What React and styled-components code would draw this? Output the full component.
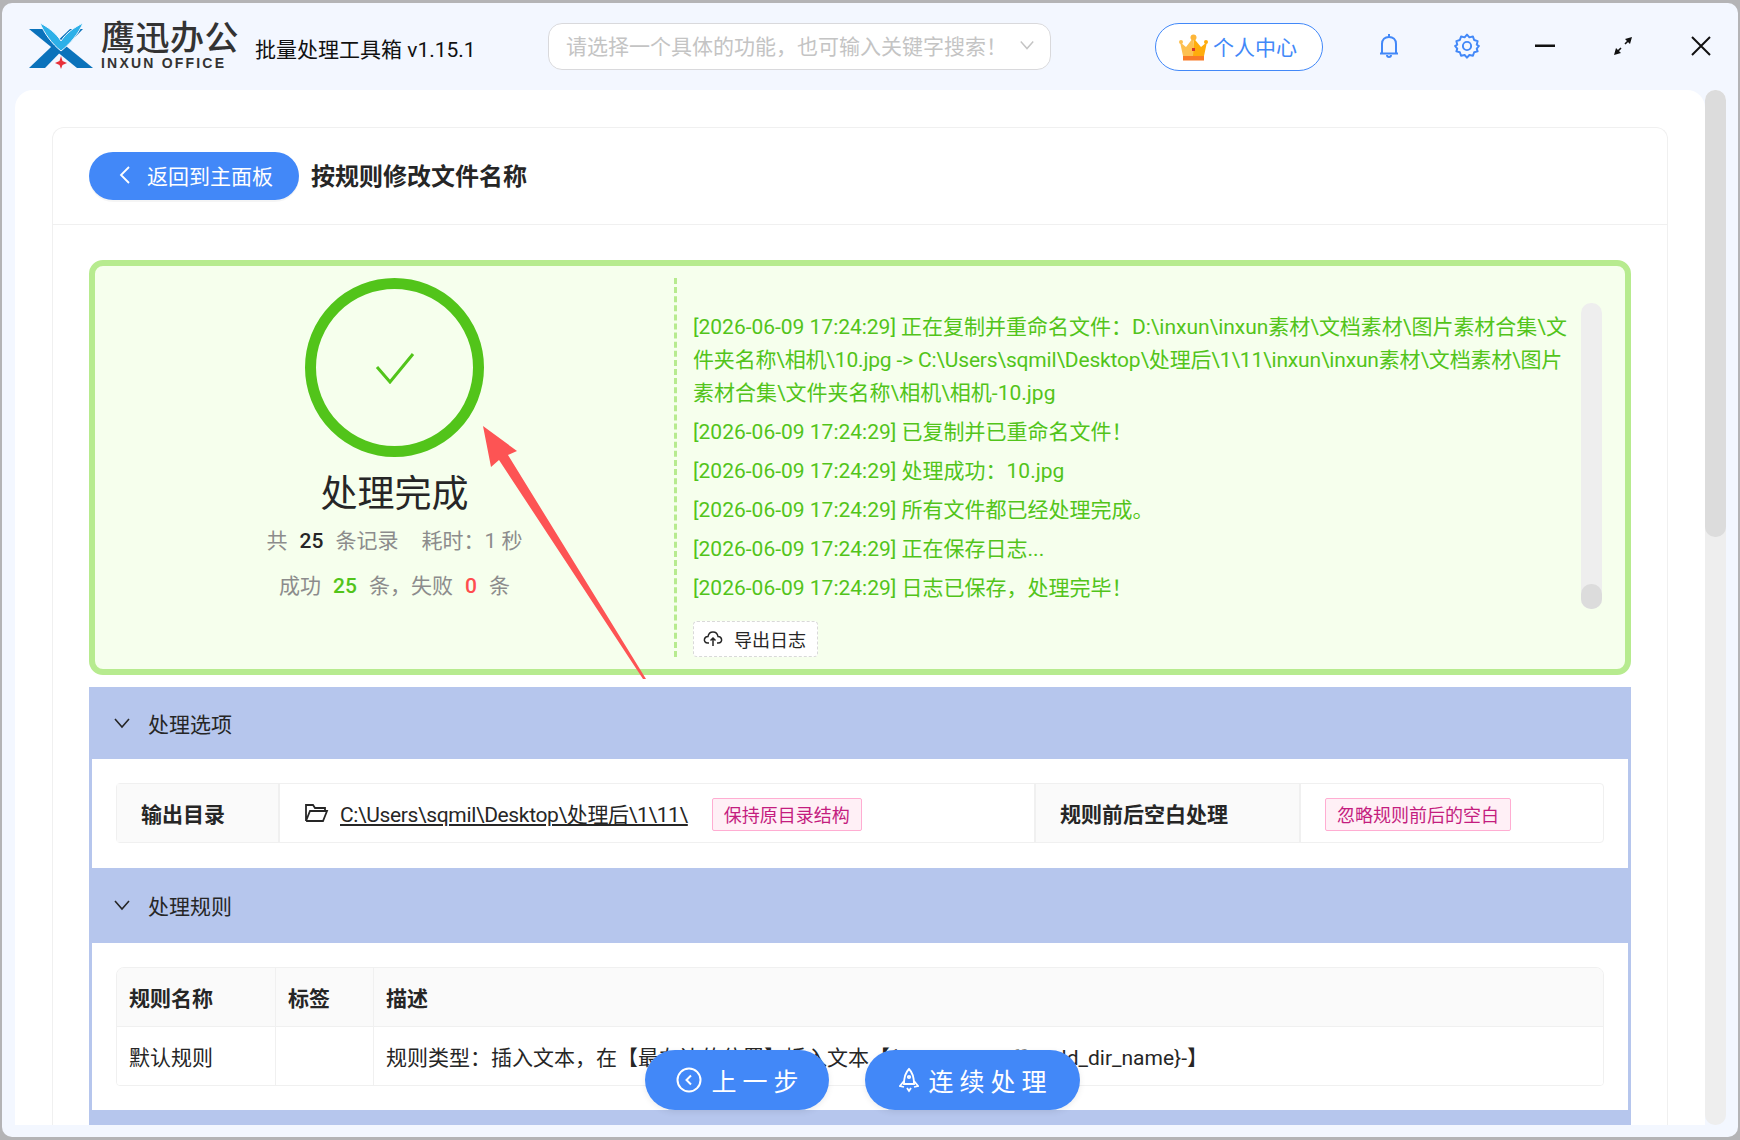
import React from "react";
import styled, { createGlobalStyle } from "styled-components";

const Global = createGlobalStyle`
  html, body { margin: 0; padding: 0; background: #b4b4b6; }
  * { box-sizing: border-box; }
  body { font-family: Roboto, "Noto Sans CJK SC", sans-serif; color: #262626; }
`;

const Screen = styled.div`
  position: relative;
  width: 1740px;
  height: 1140px;
  padding: 3px 2px 3px 2px;
  overflow: hidden;
  background: #b4b4b6;
`;
const Win = styled.div`
  width: 100%;
  height: 100%;
  background: #f3f7ff;
  border-radius: 10px;
  display: flex;
  flex-direction: column;
  overflow: hidden;
`;
const TopBar = styled.div`
  height: 87px;
  flex: none;
  display: flex;
  align-items: center;
  padding-left: 27px;
`;
const LogoMark = styled.svg`
  width: 65px;
  height: 46px;
  flex: none;
  margin-top: -2px;
`;
const LogoWords = styled.div`
  margin-left: 7px;
  width: 140px;
  display: flex;
  flex-direction: column;
  margin-top: -4px;
`;
const LogoCn = styled.div`
  font-size: 34px;
  line-height: 36px;
  font-weight: 500;
  color: #333;
  letter-spacing: 0.5px;
  white-space: nowrap;
`;
const LogoEn = styled.div`
  font-family: "Liberation Sans", sans-serif;
  font-size: 14px;
  line-height: 14px;
  font-weight: 700;
  color: #333;
  letter-spacing: 2.2px;
  white-space: nowrap;
`;
const AppName = styled.div`
  margin-left: 14px;
  width: 293px;
  margin-top: 2px;
  font-size: 21px;
  color: #111;
  white-space: nowrap;
`;
const Search = styled.div`
  width: 503px;
  height: 47px;
  margin-top: -1px;
  background: #fff;
  border: 1px solid #d9d9dc;
  border-radius: 14px;
  display: flex;
  align-items: center;
  justify-content: space-between;
  padding: 0 15px 2px 17px;
  color: #c4c4c4;
  font-size: 21px;
  white-space: nowrap;
`;
const Person = styled.div`
  margin-left: 104px;
  width: 168px;
  height: 48px;
  background: #fff;
  border: 1px solid #4288f8;
  border-radius: 24px;
  display: flex;
  align-items: center;
  padding: 0 0 2px 23px;
  gap: 5px;
  color: #4288f8;
  font-size: 21px;
  white-space: nowrap;
`;
const CrownBox = styled.svg`
  margin-top: 4px;
  flex: none;
`;
const IconBtn = styled.div`
  flex: none;
  width: ${p => p.$w}px;
  margin-left: ${p => p.$ml}px;
  margin-top: -2px;
  display: flex;
  justify-content: center;
  align-items: center;
`;
const Body = styled.div`
  flex: 1;
  min-height: 0;
  display: flex;
  padding: 0 12px 12px 13px;
`;
const Panel = styled.div`
  flex: 1;
  min-width: 0;
  background: #fff;
  border-radius: 18px 18px 0 0;
  padding: 37px 37px 0 37px;
  overflow: hidden;
`;
const Rail = styled.div`
  width: 21px;
  flex: none;
  background: #eee;
  border-radius: 10px;
  overflow: hidden;
`;
const RailThumb = styled.div`
  height: 447px;
  background: #dcdcdc;
  border-radius: 10px;
`;
const Card = styled.div`
  border: 1px solid #f0f0f0;
  border-radius: 12px 12px 0 0;
  border-bottom: none;
  height: 1100px;
`;
const CardHead = styled.div`
  height: 97px;
  display: flex;
  align-items: center;
  padding: 0 36px 0 36px;
  border-bottom: 1px solid #f0f0f0;
  gap: 12px;
`;
const BackBtn = styled.div`
  width: 210px;
  height: 48px;
  background: #4288f8;
  border-radius: 24px;
  box-shadow: 0 2px 0 rgba(0, 0, 0, 0.04);
  color: #fff;
  font-size: 21px;
  display: flex;
  align-items: center;
  padding: 0 0 2px 29px;
  gap: 15px;
  white-space: nowrap;
  margin-top: -1px;
`;
const PageTitle = styled.div`
  font-size: 24px;
  font-weight: 700;
  color: #262626;
  margin-top: -3px;
  white-space: nowrap;
`;
const CardBody = styled.div`
  padding: 35px 36px 0 36px;
`;
const Result = styled.div`
  height: 415px;
  background: #f6ffed;
  border: 6px solid #b7eb8f;
  border-radius: 14px;
  display: flex;
  padding: 12px 0 12px 0;
  margin-bottom: 12px;
`;
const Summary = styled.div`
  width: 579px;
  flex: none;
  padding-left: 20px;
  display: flex;
  flex-direction: column;
  align-items: center;
`;
const Ring = styled.div`
  width: 179px;
  height: 179px;
  border: 11px solid #52c41a;
  border-radius: 50%;
  display: flex;
  align-items: center;
  justify-content: center;
`;
const DoneTitle = styled.div`
  font-size: 37px;
  line-height: 50px;
  margin-top: 13px;
  color: #262626;
`;
const StatLine = styled.div`
  font-size: 21px;
  line-height: 30px;
  margin-top: ${p => p.$mt}px;
  color: #8c8c8c;
  display: flex;
  gap: ${p => p.$gap || 12}px;
  white-space: nowrap;
`;
const StatTail = styled.span`
  margin-left: 11px;
`;
const Num = styled.b`
  font-weight: 500;
  color: ${p => p.$c};
`;
const LogPane = styled.div`
  flex: 1;
  min-width: 0;
  border-left: 3px dashed #b7eb8f;
  padding: 25px 0 0 16px;
  display: flex;
  flex-direction: column;
`;
const LogRow = styled.div`
  display: flex;
  height: 306px;
`;
const LogList = styled.div`
  width: 878px;
  flex: none;
  overflow: hidden;
  padding-top: 8px;
`;
const LogLine = styled.div`
  color: #52c41a;
  font-size: 21px;
  line-height: 33px;
  margin-bottom: 6px;
  white-space: nowrap;
`;
const LogSegment = styled.span`
  display: block;
  letter-spacing: ${p => p.$ls || 0}px;
`;
const LogRail = styled.div`
  width: 21px;
  margin-left: 10px;
  height: 306px;
  background: #eee;
  border-radius: 10px;
  display: flex;
  align-items: flex-end;
`;
const LogThumb = styled.div`
  width: 21px;
  height: 25px;
  background: #dcdcdc;
  border-radius: 10px;
`;
const ExportBtn = styled.div`
  margin-top: 12px;
  width: 125px;
  height: 36px;
  background: #fff;
  border: 1px dashed #d9d9d9;
  border-radius: 4px;
  display: flex;
  align-items: center;
  gap: 11px;
  padding-left: 9px;
  font-size: 18px;
  color: #262626;
  white-space: nowrap;
`;
const SectionHead = styled.div`
  height: ${p => p.$h}px;
  background: #b6c6ed;
  display: flex;
  align-items: center;
  padding: 0 0 1px 24px;
  gap: 17px;
  font-size: 21px;
  color: #262626;
`;
const SectionBody = styled.div`
  height: ${p => p.$h}px;
  border-left: 3px solid #b6c6ed;
  border-right: 3px solid #b6c6ed;
  padding: 24px 24px 0 24px;
  background: #fff;
`;
const Desc = styled.div`
  height: 60px;
  display: grid;
  grid-template-columns: 163px 754px 267px 1fr;
  border: 1px solid #f0f0f0;
  border-radius: 4px;
`;
const DescLabel = styled.div`
  background: #fafafa;
  font-weight: 700;
  font-size: 21px;
  color: #262626;
  display: flex;
  align-items: center;
  padding-left: 24px;
  border-right: 2px solid #f0f0f0;
  ${p => p.$bl && "border-left: 2px solid #f0f0f0;"}
`;
const DescValue = styled.div`
  display: flex;
  align-items: center;
  padding-left: 24px;
  font-size: 21px;
  white-space: nowrap;
`;
const PathLink = styled.span`
  margin-left: 11px;
  text-decoration: underline;
  letter-spacing: -0.36px;
  color: #262626;
`;
const Tag = styled.span`
  display: inline-flex;
  align-items: center;
  height: 33px;
  padding: 0 11px;
  margin-left: ${p => p.$ml || 0}px;
  margin-top: 2px;
  background: #fff0f6;
  border: 1px solid #ffadd2;
  border-radius: 2px;
  color: #c41d7f;
  font-size: 18px;
`;
const RuleTable = styled.div`
  border: 1px solid #f0f0f0;
  border-radius: 8px 8px 4px 4px;
  overflow: hidden;
`;
const RuleRow = styled.div`
  display: grid;
  grid-template-columns: 159px 98px 1fr;
  height: ${p => p.$h}px;
  background: ${p => (p.$head ? "#fafafa" : "#fff")};
  font-weight: ${p => (p.$head ? 700 : 400)};
  font-size: 21px;
  border-bottom: ${p => (p.$head ? "1px solid #f0f0f0" : "none")};
`;
const RuleCell = styled.div`
  display: flex;
  align-items: center;
  padding-left: 12px;
  white-space: nowrap;
  border-right: ${p => (p.$last ? "none" : "1px solid #f0f0f0")};
`;
const FloatBtn = styled.div`
  position: absolute;
  left: ${p => p.$x}px;
  top: 1050px;
  width: ${p => p.$w}px;
  height: 60px;
  background: #4288f8;
  border-radius: 30px;
  box-shadow: 0 2px 6px rgba(0, 0, 0, 0.08);
  color: #fff;
  font-size: 25px;
  letter-spacing: 6px;
  display: flex;
  align-items: center;
  justify-content: center;
  padding-left: 7px;
  gap: 9px;
  white-space: nowrap;
`;
const Overlay = styled.svg`
  position: absolute;
  left: 0;
  top: 0;
  pointer-events: none;
`;

const Crown = () => (
  <CrownBox width="29" height="27" viewBox="0 0 29 27">
    <path d="M1 8 L7 13 L14 4 L14 22 L4 22 Z" fill="#fdc050" />
    <path d="M28 8 L22 13 L14.500 4 L14 22 L25 22 Z" fill="#ffac0c" />
    <rect x="4" y="22" width="21" height="4.500" fill="#f97b26" />
    <circle cx="14.500" cy="3.500" r="3" fill="#fdb63a" />
    <circle cx="2" cy="8" r="2" fill="#fdc050" />
    <circle cx="27" cy="8" r="2" fill="#ffac0c" />
    <rect x="13" y="14" width="3" height="3" fill="#d7352b" />
  </CrownBox>
);

const Chevron = ({ size = 18, color = "#262626" }) => (
  <svg width={size} height={size} viewBox="0 0 18 18" fill="none" stroke={color} strokeWidth="1.600">
    <path d="M2 5 L9 13 L16 5" />
  </svg>
);

const logLead = [
  { text: "[2026-06-09 17:24:29] 正在复制并重命名文件：D:\\inxun\\inxun素材\\文档素材\\图片素材合集\\文", ls: -0.02 },
  { text: "件夹名称\\相机\\10.jpg -> C:\\Users\\sqmil\\Desktop\\处理后\\1\\11\\inxun\\inxun素材\\文档素材\\图片", ls: -0.18 },
  { text: "素材合集\\文件夹名称\\相机\\相机-10.jpg", ls: 0 },
];

const logs = [
  "[2026-06-09 17:24:29] 已复制并已重命名文件！",
  "[2026-06-09 17:24:29] 处理成功：10.jpg",
  "[2026-06-09 17:24:29] 所有文件都已经处理完成。",
  "[2026-06-09 17:24:29] 正在保存日志...",
  "[2026-06-09 17:24:29] 日志已保存，处理完毕！",
];

export default function App() {
  return (
    <Screen>
      <Global />
      <Win>
        <TopBar>
          <LogoMark viewBox="0 0 65 46">
            <path d="M0 6 H16 L64 45 H48 Z" fill="#0a72bb" />
            <path d="M54 6 H41 L0 45 H16 Z" fill="#0a72bb" />
            <path d="M11 0 C19 4 27 10 32 18 C37 10 46 4 54 0 C50 10 41 21 32 28 C23 21 15 10 11 0 Z" fill="#2db0e8" stroke="#f3f7ff" strokeWidth="1" />
            <path d="M32 33 L33.500 38 L38 40 L33.500 42 L32 46 L30.500 42 L26 40 L30.500 38 Z" fill="#e8303a" />
          </LogoMark>
          <LogoWords>
            <LogoCn>鹰迅办公</LogoCn>
            <LogoEn>INXUN OFFICE</LogoEn>
          </LogoWords>
          <AppName>批量处理工具箱 v1.15.1</AppName>
          <Search>
            <span>请选择一个具体的功能，也可输入关键字搜索！</span>
            <Chevron size={16} color="#c4c4c4" />
          </Search>
          <Person>
            <Crown />
            <span>个人中心</span>
          </Person>
          <IconBtn $w={22} $ml={55}>
            <svg width="22" height="26" viewBox="0 0 22 26" fill="none" stroke="#4288f8" strokeWidth="2">
              <path d="M4 20 V11 C4 6.500 7 4 11 4 C15 4 18 6.500 18 11 V20 M2 20.500 H20" />
              <path d="M11 1 V4 M9 22 C9 24.500 13 24.500 13 22" />
            </svg>
          </IconBtn>
          <IconBtn $w={26} $ml={54}>
            <svg width="26" height="26" viewBox="0 0 24 24" fill="none" stroke="#4288f8" strokeWidth="1.800" strokeLinejoin="round">
              <path d="M12 1.500 L14.200 4 L17.500 3.300 L18.600 6.500 L21.800 7.500 L21 10.800 L23 12 L21 14.500 L21.800 17 L18.600 17.800 L17.500 21 L14.200 20.300 L12 22.800 L9.800 20.300 L6.500 21 L5.400 17.800 L2.200 17 L3 14.500 L1 12 L3 10.800 L2.200 7.500 L5.400 6.500 L6.500 3.300 L9.800 4 Z" />
              <circle cx="12" cy="12" r="3.800" />
            </svg>
          </IconBtn>
          <IconBtn $w={22} $ml={55}>
            <svg width="22" height="4" viewBox="0 0 22 4"><rect y="0.500" width="20" height="2.500" fill="#111" /></svg>
          </IconBtn>
          <IconBtn $w={22} $ml={55}>
            <svg width="22" height="22" viewBox="0 0 22 22" fill="none" stroke="#111" strokeWidth="1.600">
              <path d="M6 16 L9 13 M13 9 L16 6" />
              <path d="M20 2 L13 4 L18 9 Z M2 20 L4 13 L9 18 Z" fill="#111" stroke="none" />
            </svg>
          </IconBtn>
          <IconBtn $w={22} $ml={56}>
            <svg width="22" height="22" viewBox="0 0 22 22" fill="none" stroke="#111" strokeWidth="2">
              <path d="M2 2 L20 20 M20 2 L2 20" />
            </svg>
          </IconBtn>
        </TopBar>
        <Body>
          <Panel>
            <Card>
              <CardHead>
                <BackBtn>
                  <svg width="14" height="20" viewBox="0 0 14 20" fill="none" stroke="#fff" strokeWidth="1.800"><path d="M11 2 L3 10 L11 18" /></svg>
                  <span>返回到主面板</span>
                </BackBtn>
                <PageTitle>按规则修改文件名称</PageTitle>
              </CardHead>
              <CardBody>
                <Result>
                  <Summary>
                    <Ring>
                      <svg width="40" height="32" viewBox="0 0 40 32" fill="none" stroke="#52c41a" strokeWidth="3"><path d="M2 15 L15 30 L38 2" /></svg>
                    </Ring>
                    <DoneTitle>处理完成</DoneTitle>
                    <StatLine $mt={6} $gap={12}>
                      <span>共</span><Num $c="#262626">25</Num><span>条记录</span>
                      <StatTail>耗时：1 秒</StatTail>
                    </StatLine>
                    <StatLine $mt={15} $gap={12}>
                      <span>成功</span><Num $c="#52c41a">25</Num><span>条，失败</span><Num $c="#ff4d4f">0</Num><span>条</span>
                    </StatLine>
                  </Summary>
                  <LogPane>
                    <LogRow>
                      <LogList>
                        <LogLine>
                          {logLead.map(s => <LogSegment key={s.text} $ls={s.ls}>{s.text}</LogSegment>)}
                        </LogLine>
                        {logs.map(l => <LogLine key={l}>{l}</LogLine>)}
                      </LogList>
                      <LogRail><LogThumb /></LogRail>
                    </LogRow>
                    <ExportBtn>
                      <svg width="20" height="20" viewBox="0 0 20 20" fill="none" stroke="#262626" strokeWidth="1.500">
                        <path d="M6 14 H5 C2 14 1 12 1.500 10 C2 8 4 7.500 5 7.500 C5.500 4.500 7.500 3 10 3 C12.500 3 14.500 4.500 15 7.500 C16 7.500 18 8 18.500 10 C19 12 18 14 15 14 H14" />
                        <path d="M10 17 V9 M7.500 11.500 L10 9 L12.500 11.500" />
                      </svg>
                      <span>导出日志</span>
                    </ExportBtn>
                  </LogPane>
                </Result>
                <SectionHead $h={72}>
                  <Chevron />
                  <span>处理选项</span>
                </SectionHead>
                <SectionBody $h={109}>
                  <Desc>
                    <DescLabel>输出目录</DescLabel>
                    <DescValue>
                      <svg width="25" height="20" viewBox="0 0 25 20" fill="none" stroke="#262626" strokeWidth="1.800"><path d="M2 18 V2 H9 L11 5 H21 V8 M2 18 H19 L23 8 H6 L2 18" /></svg>
                      <PathLink>C:\Users\sqmil\Desktop\处理后\1\11\</PathLink>
                      <Tag $ml={24}>保持原目录结构</Tag>
                    </DescValue>
                    <DescLabel $bl>规则前后空白处理</DescLabel>
                    <DescValue><Tag>忽略规则前后的空白</Tag></DescValue>
                  </Desc>
                </SectionBody>
                <SectionHead $h={75}>
                  <Chevron />
                  <span>处理规则</span>
                </SectionHead>
                <SectionBody $h={167}>
                  <RuleTable>
                    <RuleRow $head $h={59}>
                      <RuleCell>规则名称</RuleCell>
                      <RuleCell>标签</RuleCell>
                      <RuleCell $last>描述</RuleCell>
                    </RuleRow>
                    <RuleRow $h={58}>
                      <RuleCell>默认规则</RuleCell>
                      <RuleCell />
                      <RuleCell $last>规则类型：插入文本，在【最左边的位置】插入文本【{"{"}template_suffix_old_dir_name{"}"}-】</RuleCell>
                    </RuleRow>
                  </RuleTable>
                </SectionBody>
                <SectionHead $h={40} />
              </CardBody>
            </Card>
          </Panel>
          <Rail><RailThumb /></Rail>
        </Body>
      </Win>
      <FloatBtn $x={645} $w={184}>
        <svg width="26" height="26" viewBox="0 0 26 26" fill="none" stroke="#fff" strokeWidth="2"><circle cx="13" cy="13" r="11.500" /><path d="M15 8.500 L10.500 13 L15 17.500" /></svg>
        <span>上一步</span>
      </FloatBtn>
      <FloatBtn $x={865} $w={215}>
        <svg width="20" height="26" viewBox="0 0 20 26" fill="none" stroke="#fff" strokeWidth="1.800"><path d="M10 2 C6 6 5 10 5 17 H15 C15 10 14 6 10 2 Z M5 14 L1 19 L5 20 M15 14 L19 19 L15 20 M8 21 L10 24 L12 21" /><circle cx="10" cy="10" r="1.200" /></svg>
        <span>连续处理</span>
      </FloatBtn>
      <Overlay width="1740" height="1140" viewBox="0 0 1740 1140">
        <path d="M483 426 L517 451 L508 455 L646 679 L643 679 L499 460 L491 467 Z" fill="#fd5454" />
      </Overlay>
    </Screen>
  );
}
